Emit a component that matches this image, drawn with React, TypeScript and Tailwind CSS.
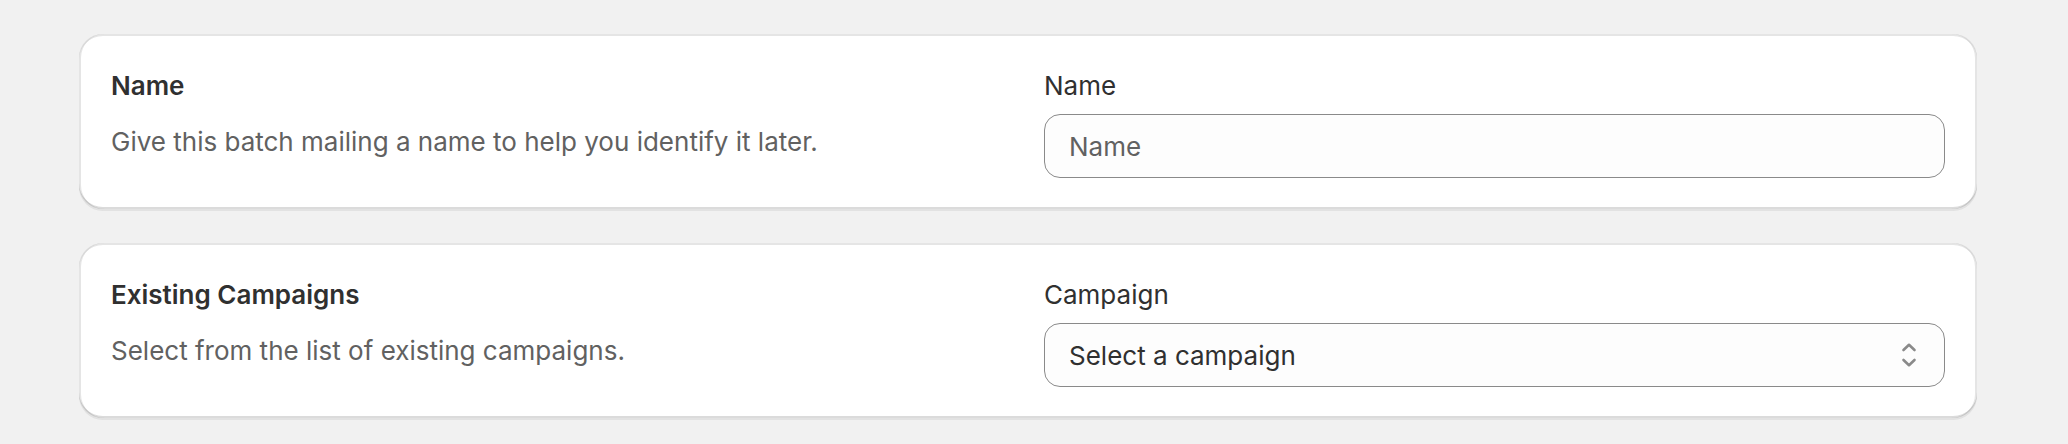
import React from 'react';

interface SectionProps {
  title: string;
  description: string;
  label: string;
  children: React.ReactNode;
}

const cardShadow =
  'shadow-[0_2px_0_0_rgba(26,26,26,0.07),inset_0_2px_0_0_rgba(204,204,204,0.5),inset_0_-2px_0_0_rgba(0,0,0,0.14),inset_2px_0_0_0_rgba(0,0,0,0.1),inset_-2px_0_0_0_rgba(0,0,0,0.1)]';

const Section: React.FC<SectionProps> = ({ title, description, label, children }) => (
  <div className={`bg-white rounded-[24px] px-8 pt-8 pb-[31px] ${cardShadow}`}>
    <div className="grid grid-cols-2 gap-8">
      <div className="flex flex-col gap-4">
        <h2 className="text-[26px] leading-[40px] font-semibold text-[#303030]">{title}</h2>
        <p className="text-[26px] leading-[40px] text-[#616161]">{description}</p>
      </div>
      <div className="flex flex-col">
        <label className="text-[26px] leading-[40px] text-[#303030] mb-2">{label}</label>
        {children}
      </div>
    </div>
  </div>
);

function SelectIcon() {
  return (
    <svg width="16" height="24" viewBox="0 0 16 24" fill="none" stroke="#8a8a8a" strokeWidth="2.6" strokeLinecap="round" strokeLinejoin="round">
      <polyline points="2.5,7 8,1.8 13.5,7" />
      <polyline points="2.5,17 8,22.2 13.5,17" />
    </svg>
  );
}

export default function App() {
  return (
    <div
      className="min-h-[444px] bg-[#f1f1f1] pt-[34px]"
      style={{ fontFamily: 'Inter, "Noto Sans", sans-serif' }}
    >
      <div className="ml-[79px] w-[1898px] flex flex-col gap-[34px]">
        <Section
          title="Name"
          description="Give this batch mailing a name to help you identify it later."
          label="Name"
        >
          <input
            placeholder="Name"
            className="h-[64px] w-full rounded-[16px] border border-[#8a8a8a] bg-[#fdfdfd] px-6 text-[26px] text-[#303030] placeholder:text-[#616161] outline-none"
          />
        </Section>
        <Section
          title="Existing Campaigns"
          description="Select from the list of existing campaigns."
          label="Campaign"
        >
          <div className="h-[64px] w-full rounded-[16px] border border-[#8a8a8a] bg-[#fdfdfd] pl-6 pr-[27px] flex items-center justify-between">
            <span className="text-[26px] text-[#303030]">Select a campaign</span>
            <SelectIcon />
          </div>
        </Section>
      </div>
    </div>
  );
}
